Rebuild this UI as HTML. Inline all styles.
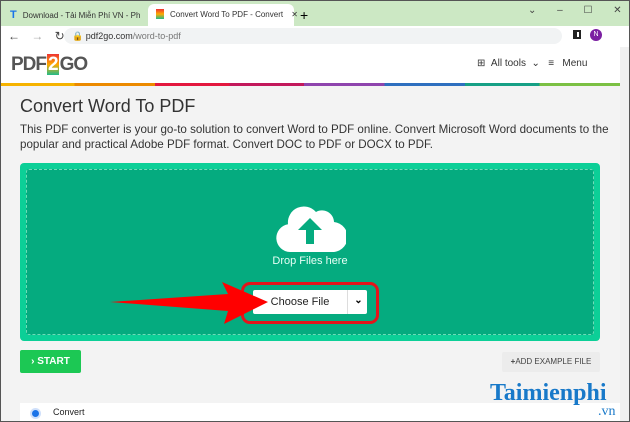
<!DOCTYPE html><html><head><style>
body{margin:0;width:630px;height:422px;overflow:hidden;position:relative;font-family:"Liberation Sans",sans-serif;background:#f3f3f3}
.a{position:absolute}
</style></head><body>
<div class="a" style="left:0;top:0;width:630px;height:26px;background:#cce8c4"></div>
<div class="a" style="left:4px;top:5px;width:140px;height:20px;font-size:8px;color:#333;line-height:20px;white-space:nowrap"><b style="color:#1a73e8;font-size:11px;margin:0 6px 0 6px">T</b>Download - Tải Miễn Phí VN - Ph <span style="margin-left:6px">✕</span></div>
<div class="a" style="left:148px;top:4px;width:146px;height:22px;background:#fff;border-radius:6px 6px 0 0"></div>
<div class="a" style="left:156px;top:9px;width:8px;height:10px;background:linear-gradient(#e33,#fa0,#2b8)"></div>
<div class="a" style="left:170px;top:4px;font-size:8px;line-height:22px;color:#333;white-space:nowrap">Convert Word To PDF - Convert <span style="margin-left:6px">✕</span></div>
<div class="a" style="left:300px;top:4px;font-size:14px;line-height:22px">+</div>
<div class="a" style="left:528px;top:4px;font-size:10px;line-height:14px;color:#444;word-spacing:18px">⌄ – ☐ ✕</div>
<div class="a" style="left:0;top:26px;width:630px;height:21px;background:#fff"></div>
<div class="a" style="left:8px;top:27px;font-size:12px;color:#444;line-height:18px;word-spacing:8px">← <span style="color:#aaa">→</span> ↻</div>
<div class="a" style="left:64px;top:28px;width:498px;height:16px;background:#f1f3f4;border-radius:8px"></div>
<div class="a" style="left:72px;top:28px;font-size:9px;line-height:16px;color:#333">🔒 pdf2go.com<span style="color:#777">/word-to-pdf</span></div>
<div class="a" style="left:573px;top:30px;width:8px;height:9px;border:2px solid #222;border-left-width:4px;box-sizing:border-box"></div>
<div class="a" style="left:590px;top:29px;width:12px;height:12px;border-radius:50%;background:#7b1fa2;color:#fff;font-size:7px;text-align:center;line-height:12px">N</div>
<div class="a" style="left:0;top:47px;width:620px;height:36px;background:#fff"></div>
<div class="a" style="left:11px;top:53px;font-size:19px;font-weight:bold;color:#555;line-height:24px;letter-spacing:-1px">PDF<span style="background:linear-gradient(#e33,#fa0,#2b8);color:#fff;padding:0 1px;margin:0 1px">2</span>GO</div>
<div class="a" style="left:477px;top:58px;font-size:10px;color:#333">⊞ &nbsp;All tools &nbsp;⌄ &nbsp;&nbsp;≡ &nbsp;&nbsp;Menu</div>
<div class="a" style="left:0;top:83px;width:620px;height:3px;background:linear-gradient(90deg,#f6b300 0 12%,#ec8a00 12% 25%,#e3173e 25% 37%,#c2185b 37% 49%,#8e44ad 49% 62%,#2e6fbf 62% 75%,#16a085 75% 87%,#7bc043 87%)"></div>
<div class="a" style="left:620px;top:47px;width:10px;height:375px;background:#f1f1f1"></div>
<div class="a" style="left:20px;top:96px;font-size:18px;color:#333">Convert Word To PDF</div>
<div class="a" style="left:20px;top:122px;width:600px;font-size:11.6px;line-height:15px;color:#333;white-space:nowrap">This PDF converter is your go-to solution to convert Word to PDF online. Convert Microsoft Word documents to the<br>popular and practical Adobe PDF format. Convert DOC to PDF or DOCX to PDF.</div>
<div class="a" style="left:20px;top:163px;width:580px;height:178px;background:#0ccf97;border-radius:4px"></div>
<div class="a" style="left:26px;top:169px;width:566px;height:164px;background:#05ab7f;border:1px dashed #6fdcb8;border-radius:3px"></div>
<svg class="a" style="left:276px;top:204px" width="70" height="48" viewBox="0 0 70 48"><path d="M14 48a14 14 0 0 1-2-27.8A16 16 0 0 1 40 8a12 12 0 0 1 18 10 15 15 0 0 1-3 30z" fill="#fff"/><path d="M34 14 22 26h8v14h8V26h8z" fill="#05ab7f"/></svg>
<div class="a" style="left:260px;top:255px;width:100px;text-align:center;font-size:11px;color:#e8fff6">Drop Files here</div>
<div class="a" style="left:241px;top:282px;width:132px;height:36px;border:3px solid #e5141a;border-radius:9px;background:#05ab7f"></div>
<div class="a" style="left:253px;top:290px;width:114px;height:24px;background:#fff;border-radius:2px"></div>
<div class="a" style="left:347px;top:290px;width:1px;height:24px;background:#ddd"></div>
<div class="a" style="left:253px;top:290px;width:94px;line-height:24px;text-align:center;font-size:11px;color:#222">Choose File</div>
<div class="a" style="left:350px;top:290px;width:17px;line-height:22px;text-align:center;font-size:10px;font-weight:bold">⌄</div>
<svg class="a" style="left:108px;top:280px" width="160" height="46"><polygon points="2,22 120,14 114,2 160,22 116,44 120,31" fill="#f00"/></svg>
<div class="a" style="left:20px;top:350px;width:61px;height:23px;background:#1cc854;border-radius:2px;color:#fff;font-size:10px;font-weight:bold;line-height:23px;text-align:center">› START</div>
<div class="a" style="left:502px;top:352px;width:98px;height:20px;background:#ececec;border-radius:2px;font-size:8px;color:#444;line-height:20px;text-align:center"><b>+</b>ADD EXAMPLE FILE</div>
<div class="a" style="left:20px;top:403px;width:600px;height:19px;background:#fff"></div>
<div class="a" style="left:32px;top:410px;width:7px;height:7px;border-radius:50%;background:#1a73e8;box-shadow:0 0 0 2px #cfe0fb"></div>
<div class="a" style="left:53px;top:407px;font-size:9px;color:#222">Convert</div>
<div class="a" style="left:490px;top:380px;font-size:24px;font-weight:bold;color:#1879c9;font-family:'Liberation Serif',serif">Taimienphi</div>
<div class="a" style="left:598px;top:404px;font-size:14px;color:#1879c9;font-family:'Liberation Serif',serif">.vn</div>
<div class="a" style="left:0;top:0;width:628px;height:420px;border:1px solid #555"></div>
</body></html>
